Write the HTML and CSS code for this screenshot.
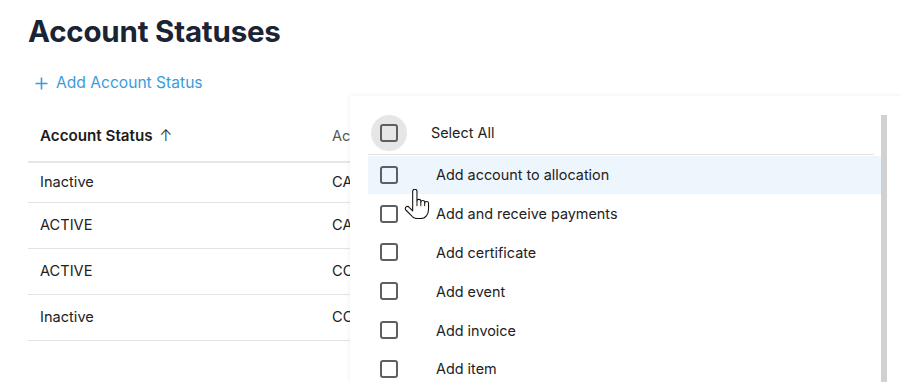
FILE: index.html
```html
<!DOCTYPE html>
<html>
<head>
  <meta charset="utf-8">
  <title>Account Statuses</title>
  <link rel="stylesheet" href="styles.css">
</head>
<body>
  <h1 class="page-title">Account Statuses</h1>
  <a class="add-link" href="#">
    <svg class="plus" width="13" height="13" viewBox="0 0 13 13"><path d="M6.5 0.5v12M0.5 6.5h12" stroke="#3b9bdc" stroke-width="1.6"/></svg>
    Add Account Status
  </a>

  <div class="content">
    <table class="grid">
      <thead>
        <tr><th class="col-status">Account Status <span class="sort">&#8593;</span></th><th>Account Type</th></tr>
      </thead>
      <tbody>
        <tr class="first"><td>Inactive</td><td>CASH</td></tr>
        <tr><td>ACTIVE</td><td>CASH</td></tr>
        <tr><td>ACTIVE</td><td>COLLECTION</td></tr>
        <tr><td>Inactive</td><td>COLLECTION</td></tr>
      </tbody>
    </table>

    <div class="picker">
      <div class="picker-body">
        <div class="select-all">
          <span class="box-ring"><span class="box"></span></span>
          <span class="label">Select All</span>
        </div>
        <ul class="options">
          <li class="hover"><span class="box"></span><span class="label">Add account to allocation</span></li>
          <li><span class="box"></span><span class="label">Add and receive payments</span></li>
          <li><span class="box"></span><span class="label">Add certificate</span></li>
          <li><span class="box"></span><span class="label">Add event</span></li>
          <li><span class="box"></span><span class="label">Add invoice</span></li>
          <li><span class="box"></span><span class="label">Add item</span></li>
        </ul>
      </div>
      <div class="scrollbar"></div>

      <svg class="cursor" width="27" height="30" viewBox="0 0 25 28">
        <path d="M8 2.2c0-1.2 .9-2 2-2s2 .8 2 2v9.3c0-1 .8-1.8 1.8-1.8s1.8 .8 1.8 1.8v1c0-1 .8-1.8 1.8-1.8s1.8 .8 1.8 1.8v1c0-1 .8-1.8 1.8-1.8s1.8 .8 1.8 1.8v5.5c0 4.6-2.8 8.6-7.4 8.6h-3.2c-2.6 0-4.3-1.1-5.8-3.2L1.6 19.6c-.8-1-.6-2.3 .3-2.9 .9-.6 2.1-.4 2.8 .4L8 20.4z" fill="#fff" stroke="#111" stroke-width="1" stroke-linejoin="round"/>
        <path d="M12 11.5v4.5M15.6 12.5v3.5M19.2 13.5v2.5" stroke="#111" stroke-width="0.9" fill="none"/>
      </svg>
    </div>
  </div>
</body>
</html>
```

FILE: styles.css
```css
html, body { height:100%; }
body { margin:0; padding:0 0 0 28px; box-sizing:border-box; background:#fff; font-family:Inter, "Liberation Sans", sans-serif; color:#222; overflow:hidden; }

.page-title { margin:0; padding-top:12px; font-size:29.5px; font-weight:700; color:#1b2434; letter-spacing:-0.2px; line-height:38px; }

.add-link { display:inline-flex; align-items:center; margin-top:23px; color:#3b9bdc; text-decoration:none; font-size:15.6px; line-height:20px; }
.add-link .plus { margin:0 8px 0 7px; }

.content { position:relative; margin-top:17px; }

.grid { border-collapse:collapse; width:560px; font-size:14.6px; }
.grid th { text-align:left; font-weight:600; font-size:15.2px; color:#1c1c1c; height:50px; padding:0 0 0 12px; border-bottom:2px solid #e6e6e6; white-space:nowrap; }
.grid th + th { font-weight:400; font-size:14.6px; color:#555; padding-left:0; }
.grid .col-status { width:292px; }
.grid .sort { font-weight:300; margin-left:3px; }
.grid td { height:45px; padding:0 0 0 12px; border-bottom:1px solid #e3e3e3; white-space:nowrap; }
.grid td + td { padding-left:0; }
.grid tr.first td { height:39px; }

.picker { position:absolute; left:322px; top:-15px; width:560px; height:286px; background:#fff; box-shadow:0 0 5px rgba(0,0,0,0.07); display:flex; }
.picker-body { width:513px; margin-left:18px; padding-top:18px; }

.box { display:inline-block; width:14px; height:14px; border:2px solid #5f5f5f; border-radius:3px; flex:none; }

.select-all { display:flex; align-items:center; height:38px; padding-left:3px; font-size:14.4px; color:#222; }
.box-ring { width:36px; height:36px; border-radius:50%; background:#e6e6e6; display:flex; align-items:center; justify-content:center; }
.select-all .label { margin-left:24px; }

.options { list-style:none; margin:2px 7px 0 0; padding:0; border-top:1px solid #e2e2e2; }
.options li { display:flex; align-items:center; height:38.8px; padding-left:12px; font-size:14.4px; color:#222; margin-right:-7px; }
.options li:first-child { margin-top:1px; }
.options li.hover { background:#eef6fd; }
.options .label { margin-left:38px; }

.scrollbar { width:6px; margin-top:19px; background:#d1d1d1; }

.cursor { position:absolute; left:54px; top:93px; }
```
